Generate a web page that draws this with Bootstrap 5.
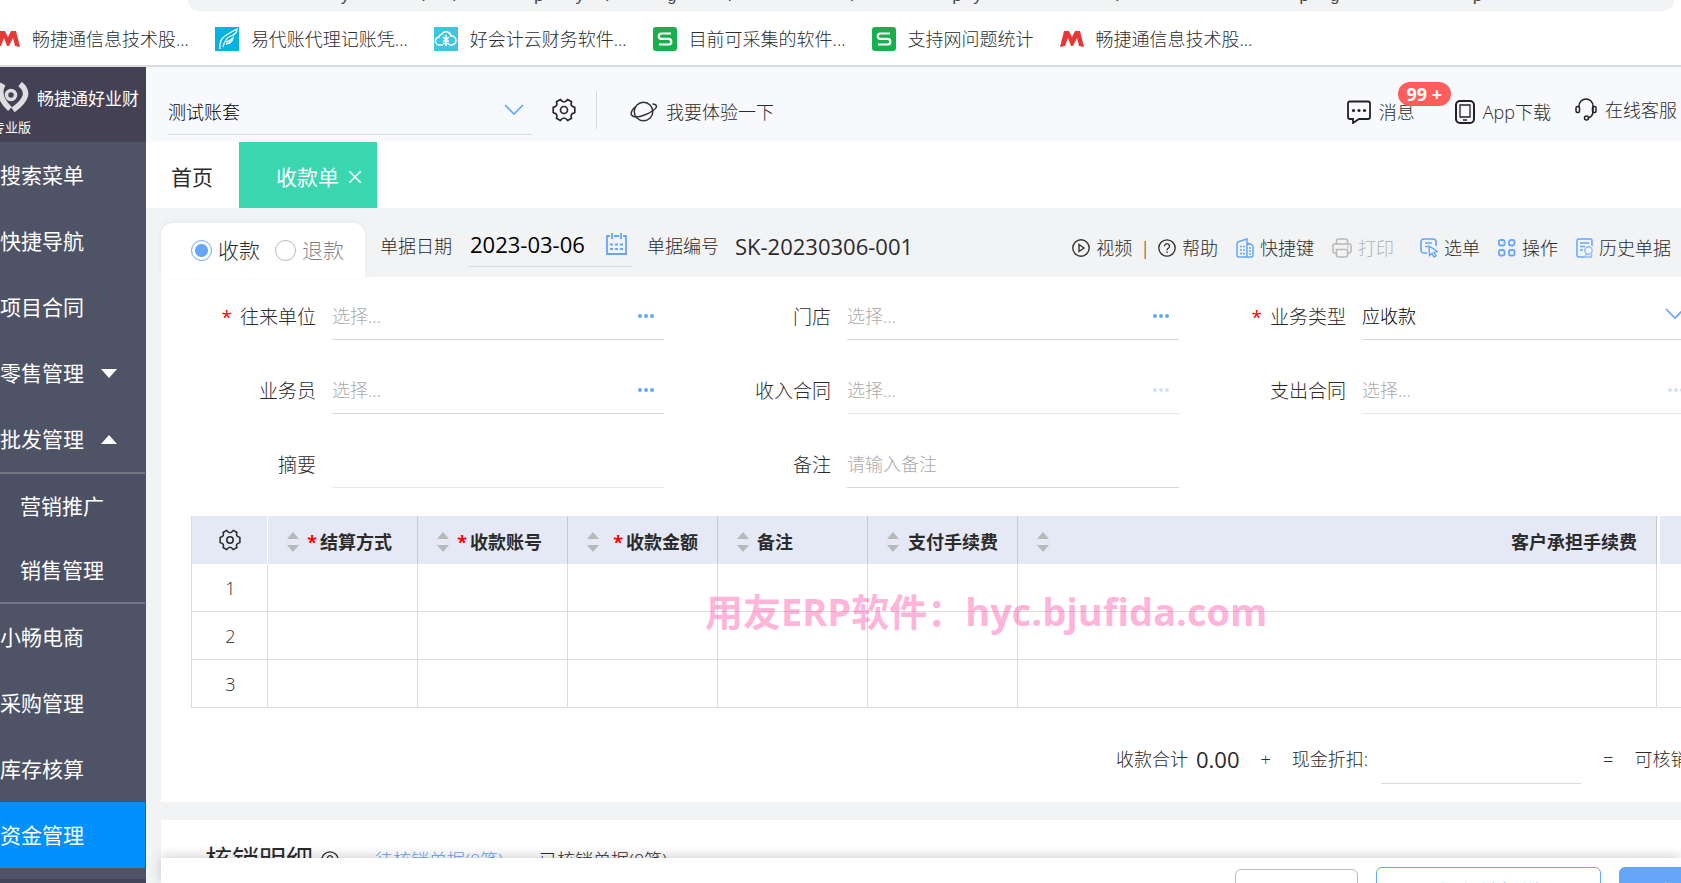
<!DOCTYPE html>
<html lang="zh-CN">
<head>
<meta charset="utf-8">
<meta name="viewport" content="width=device-width, initial-scale=1">
<title>收款单</title>
<link href="https://cdn.jsdelivr.net/npm/bootstrap@5.3.0/dist/css/bootstrap.min.css" rel="stylesheet">
<style>
:root{--blue:#66a6f8;--ink:#2b2b2b;--line:#dcdcdc;--page:#f2f3f5}
body{font-family:"Open Sans","Noto Sans CJK SC",sans-serif;font-size:18px;line-height:24px;color:var(--ink);font-weight:300;background:var(--page)}
a{color:inherit;text-decoration:none}
svg{flex:none;display:block}
.fs-menu{font-size:21px}
.shell{height:100vh;overflow:hidden}
.min-0{min-width:0;min-height:0}
/* browser strip */
.omni{height:11px;margin:0 7px 0 188px;background:#f1f3f4;border-radius:0 0 16px 16px;overflow:hidden;padding-left:152px;font:17px/16px "Liberation Mono",monospace;color:#444}
.omni span{display:block;margin-top:-11px;white-space:pre}
.bookmarks{height:56px;border-bottom:2px solid #dadce0;margin-left:-4px;gap:26px;color:#2b2e31;padding-top:2px}
.bookmarks a{gap:12px}
/* sidebar */
.side{width:146px;background:#4f5366;color:#fff;overflow:hidden;font-weight:400}
.brand-box{height:75px;background:#434153;padding-top:15px}
.brand-name{font-size:17px;padding-top:3px}
.edition{font-size:13px;line-height:16px;margin-left:-8px;margin-top:7px}
.side a{height:66px;gap:17px;margin-right:1px}
.side .submenu{border-top:2px solid #737685;border-bottom:2px solid #737685;background:#4c5064;margin-right:1px}
.submenu a{height:64px;padding-left:20px}
.side .active{background:#0091ff}
.side-foot{background:#42465a;margin-top:11px}
/* header */
.topbar{height:75px;background:#f8f9fd;padding:10px 4px 0 22px}
.account{width:364px;border-bottom:1px solid var(--line);height:45px;margin-top:5px}
.plain{border:0;background:none;padding:0;color:inherit;font-weight:inherit;line-height:24px}
select.plain{appearance:none;color:#000;width:100%;outline:0}
input.plain{width:100%;min-width:0;outline:0}
input.plain::placeholder{color:#aaa;opacity:1}
.vline{width:1px;height:38px;background:#d6d8dc;margin:0 25px 0 20px}
.count{left:51px;top:-14px;background:#ff5c5c;color:#fff;height:24px;width:53px;border-radius:12px;font-weight:700;white-space:nowrap}
.tabs{height:66px;background:#fff;font-weight:400}
.tab-home{padding:4px 26px 0 25px}
.tab-on{background:#3ad6b0;color:#fff;padding:3px 16px 0 37px;gap:10px}
/* document head */
.kind{height:54px;width:204px;background:#fff;border-radius:12px 12px 0 0;padding-left:30px;box-shadow:0 -1px 6px rgba(0,0,0,.05)}
.kind label{margin:0 15px 0 6px}
.kind input{appearance:none;width:21px;height:21px;border:1px solid #b4b4b4;border-radius:50%;margin:0;background:#fff}
.kind input:checked{border-color:var(--blue);background:radial-gradient(circle,var(--blue) 6px,#fff 7px)}
.dochead{padding:15px 0 0 15px}
.dochead > :not(.kind){margin-bottom:9px}
.dochead > .tools{margin-bottom:4px}
.date-box{width:164px;border-bottom:1px solid var(--line);height:43px;padding:0 5px 2px 2px}
.date-box,.doc-no{margin-left:16px}
.date-label,.no-label{margin-left:15px}
.fs-num{font-size:22px}
.num-strong{font-weight:400}
.tools{padding-right:10px}
.tools .plain{display:flex;align-items:center;white-space:nowrap;gap:6px;margin-right:18px}
.tools .plain.wide-gap{margin-right:26px}
.tools .plain.tight{margin-right:0}
.mute{color:#b4b4b4}
.panel{background:#fff;margin-left:15px}
/* form */
.fields{display:grid;grid-template-columns:repeat(3,332px);column-gap:183px;row-gap:26px;padding:15px 0 0 171px;overflow:hidden}
.field{height:48px;border-bottom:1px solid #d8d8d8;position:relative;padding:0 9px 0 0}
.field.off{border-color:#e8e8e8}
.field > label{position:absolute;right:100%;margin-right:16px;white-space:nowrap;font-size:19px;top:13px}
.req{color:red;margin-right:8px;font-weight:400}
.dots{color:var(--blue)}
.off .dots{color:#cfe3fd}
/* grid */
.grid-wrap{padding:28px 0 0 30px;overflow:hidden}
.bill{width:1660px;table-layout:fixed;border-collapse:separate;border-spacing:0;margin:0}
.bill th,.bill td{height:48px;padding:0 19px;border-right:1px solid var(--line)}
.bill th{background:#e5e9f5;border-color:#c8cad0;font-weight:700;padding-top:4px}
.bill td{border-bottom:1px solid var(--line);text-align:center}
.bill td:first-child{padding-left:21px}
.bill th:first-child{padding-top:0}
.bill tr > :first-child{border-left:1px solid var(--line)}
.bill th:first-child{border-right-color:#fff}
.bill .slit{border-left:3px solid #fff}
.bill .req{margin:0 3px 0 0;font-weight:700}
.bill .inset{padding-right:6px}
.mark-text{left:705px;top:588px;font-size:38px;line-height:46px;font-weight:700;color:rgba(255,84,172,.46);white-space:nowrap;pointer-events:none}
.totals{padding:25px 0 18px;margin-left:955px;white-space:nowrap;overflow:hidden}
.totals .part{margin-left:21px}
.discount{flex:none;width:200px!important;border-bottom:1px solid var(--line)!important;height:51px;margin:0 1px 0 13px}
.settle{margin-top:18px;padding:16px 0 0 44px;height:64px}
.settle h2{font-size:27px;line-height:36px;font-weight:400;margin:0}
.settle a{margin-left:36px}
.foot{height:25px;background:#fff;margin-left:15px;box-shadow:0 -2px 12px rgba(0,0,0,.18);position:relative;padding-left:1074px;gap:18px}
.foot button{height:50px;flex:none;border-radius:6px;border:1px solid var(--blue);background:#fff;color:var(--blue);margin-top:9px;font-size:21px;line-height:24px}
.foot .quiet{width:123px;border-color:#bbb;color:#555;margin-top:11px}
.foot .wide{width:225px}
.foot .fill{width:123px;background:var(--blue);color:#fff}
</style>
</head>
<body>
<svg width="0" height="0" class="position-absolute" aria-hidden="true">
  <defs>
    <symbol id="gear" viewBox="0 0 24 24"><g fill="none" stroke="currentColor" stroke-width="1.700" stroke-linejoin="round"><path d="M15.600 1.500L19.600 3.800Q17.500 8 22.800 9.300V14.700Q17.500 16 19.600 20.200L15.600 22.500Q12 17.500 8.400 22.500L4.400 20.200Q6.500 16 1.200 14.700V9.300Q6.500 8 4.400 3.800L8.400 1.500Q12 6.500 15.600 1.500z"/><circle cx="12" cy="12" r="3.500"/></g></symbol>
    <symbol id="sort" viewBox="0 0 12 20"><path d="M6 0l6 7H0zM6 20l6-7H0z" fill="#b8b8b8"/></symbol>
    <symbol id="dots3" viewBox="0 0 16 4"><g fill="currentColor"><circle cx="2" cy="2" r="2"/><circle cx="8" cy="2" r="2"/><circle cx="14" cy="2" r="2"/></g></symbol>
    <symbol id="chev" viewBox="0 0 20 12"><path d="M1 1l9 9 9-9" fill="none" stroke="#66a6f8" stroke-width="1.700"/></symbol>
    <symbol id="em" viewBox="0 0 24 18"><path d="M0 17L4 1h5l3 6 3-6h5l4 16-5-1-2-8-4 8h-2L8 8l-3 8z" fill="#e53935"/></symbol>
    <symbol id="ess" viewBox="0 0 24 24"><rect width="24" height="24" rx="3" fill="#18b04e"/><path d="M18 6.500H8.500a2.700 2.700 0 0 0 0 5.400h7a2.700 2.700 0 0 1 0 5.600H6" fill="none" stroke="#fff" stroke-width="2.200"/></symbol>
    <symbol id="help" viewBox="0 0 18 18"><g fill="none" stroke="currentColor" stroke-width="1.300"><circle cx="9" cy="9" r="8.200"/><path d="M6.500 7.200a2.500 2.500 0 1 1 3.800 2.100Q9 10 9 11.200M9 12.500v1.400"/></g></symbol>
  </defs>
</svg>
<div class="shell d-flex flex-column">
  <div class="bg-white">
    <div class="omni" aria-hidden="true"><span>y       /  /       p   y  /     g     /           /         p y             /                 p  g             p</span></div>
    <nav class="bookmarks d-flex align-items-center text-nowrap">
      <a href="#" class="d-flex align-items-center"><svg width="24" height="18"><use href="#em"/></svg>畅捷通信息技术股...</a>
      <a href="#" class="d-flex align-items-center"><svg width="24" height="24" viewBox="0 0 24 24"><path fill="#06b2e2" d="M0 0h24v24H0z"/><path d="M5 22Q4 13 10 9T22 2q0 5-6 7T8 20M11 15q4-1 7-4-1 5-7 6" fill="none" stroke="#fff" stroke-width="1.300"/></svg>易代账代理记账凭...</a>
      <a href="#" class="d-flex align-items-center"><svg width="24" height="24" viewBox="0 0 24 24"><path fill="#3ec6df" d="M0 0h24v24H0z"/><path d="M9 18H6a4 4 0 0 1-1-8 4 4 0 0 1 3-3 5 5 0 0 1 9 2 4.500 4.500 0 0 1 1 9h-3M12 8v11M9 10l3 3 3-3M9 14h6M9 16.500h6" fill="none" stroke="#fff" stroke-width="1.500"/></svg>好会计云财务软件...</a>
      <a href="#" class="d-flex align-items-center"><svg width="24" height="24"><use href="#ess"/></svg>目前可采集的软件...</a>
      <a href="#" class="d-flex align-items-center"><svg width="24" height="24"><use href="#ess"/></svg>支持网问题统计</a>
      <a href="#" class="d-flex align-items-center"><svg width="24" height="18"><use href="#em"/></svg>畅捷通信息技术股...</a>
    </nav>
  </div>
  <div class="d-flex flex-fill min-0">
    <aside class="side d-flex flex-column flex-shrink-0 fs-menu text-nowrap">
      <div class="brand-box flex-shrink-0">
        <div class="d-flex align-items-center">
          <svg width="29" height="30" viewBox="0 0 29 30"><g fill="none" stroke="#dedee2"><path d="M3 2Q-4 14 10 27M20 2Q34 13 13 28" stroke-width="5.500"/><circle cx="11" cy="13" r="4.500" stroke-width="3.500"/></g></svg>
          <span class="brand-name ms-2">畅捷通好业财</span>
        </div>
        <div class="edition">专业版</div>
      </div>
      <a href="#" class="d-flex align-items-center flex-shrink-0">搜索菜单</a>
      <a href="#" class="d-flex align-items-center flex-shrink-0">快捷导航</a>
      <a href="#" class="d-flex align-items-center flex-shrink-0">项目合同</a>
      <a href="#" class="d-flex align-items-center flex-shrink-0">零售管理<svg width="16" height="9"><path d="M0 0h16L8 9z" fill="#fff"/></svg></a>
      <a href="#" class="d-flex align-items-center flex-shrink-0">批发管理<svg width="16" height="9"><path d="M0 9h16L8 0z" fill="#fff"/></svg></a>
      <div class="submenu flex-shrink-0">
        <a href="#" class="d-flex align-items-center">营销推广</a>
        <a href="#" class="d-flex align-items-center">销售管理</a>
      </div>
      <a href="#" class="d-flex align-items-center flex-shrink-0">小畅电商</a>
      <a href="#" class="d-flex align-items-center flex-shrink-0">采购管理</a>
      <a href="#" class="d-flex align-items-center flex-shrink-0">库存核算</a>
      <a href="#" class="d-flex align-items-center flex-shrink-0 active">资金管理</a>
      <div class="side-foot flex-fill"></div>
    </aside>
    <div class="d-flex flex-column flex-fill min-0">
      <header class="topbar d-flex align-items-center flex-shrink-0 text-nowrap">
        <div class="account d-flex align-items-center pe-2">
          <select class="plain" aria-label="账套"><option>测试账套</option></select>
          <svg width="20" height="12" class="mb-1"><use href="#chev"/></svg>
        </div>
        <button class="plain ms-3 ps-1" aria-label="设置"><svg width="24" height="24"><use href="#gear"/></svg></button>
        <span class="vline"></span>
        <a href="#" class="d-flex align-items-center gap-2 ms-2 pt-1"><svg width="28" height="22" viewBox="0 0 28 22"><g fill="none" stroke="#333" stroke-width="1.500"><circle cx="13.500" cy="10.500" r="9.300"/><path d="M5 6Q0 11 1.500 14q3 4 13 0t12-8q0-3-4-3"/></g></svg>我要体验一下</a>
        <div class="d-flex align-items-center ms-auto">
          <a href="#" class="d-flex align-items-center gap-2 position-relative pt-1 me-4"><svg width="24" height="24" viewBox="0 0 24 24"><path d="M3 1.500h18q2 0 2 2V17q0 2-2 2h-9l-6 4v-4H3q-2 0-2-2V3.500q0-2 2-2z" fill="none" stroke="#222" stroke-width="1.800"/><g fill="#222"><circle cx="6.500" cy="10.500" r="1.600"/><circle cx="12" cy="10.500" r="1.600"/><circle cx="17.500" cy="10.500" r="1.600"/></g></svg>消息<span class="count position-absolute text-center">99 +</span></a>
          <a href="#" class="d-flex align-items-center gap-2 pt-1 ms-3 me-4"><svg width="20" height="24" viewBox="0 0 20 24"><g fill="none" stroke="#222"><rect x="1" y="1" width="18" height="22" rx="4" stroke-width="2"/><path d="M5 5h10v12H5z" stroke-width="1.300"/><path d="M8 20h4" stroke-width="1.500"/></g></svg>App下载</a>
          <a href="#" class="d-flex align-items-center gap-2"><svg width="22" height="24" viewBox="0 0 22 24"><g fill="none" stroke="#222" stroke-width="1.500"><path d="M4 9V8a7 7 0 0 1 14 0v5q0 6-5 7"/><rect x="1" y="8.500" width="3.500" height="6" rx="1.500"/><rect x="17.500" y="8.500" width="3.500" height="6" rx="1.500"/><circle cx="11.500" cy="20" r="2"/></g></svg>在线客服</a>
        </div>
      </header>
      <nav class="tabs d-flex flex-shrink-0 fs-menu">
        <a href="#" class="tab-home d-flex align-items-center">首页</a>
        <a href="#" class="tab-on d-flex align-items-center">收款单<svg width="12" height="12"><path d="M0 0l12 12M12 0L0 12" stroke="#fff" stroke-width="1.500"/></svg></a>
      </nav>
      <main class="flex-fill overflow-hidden min-0">
        <div class="dochead d-flex align-items-center text-nowrap">
          <div class="kind d-flex align-items-center fs-menu flex-shrink-0">
            <input type="radio" name="kind" id="k1" checked><label for="k1">收款</label>
            <input type="radio" name="kind" id="k2"><label for="k2" class="text-black-50">退款</label>
          </div>
          <label for="date" class="date-label">单据日期</label>
          <div class="date-box d-flex align-items-center">
            <input id="date" class="plain fs-num num-strong text-black" value="2023-03-06">
            <svg width="21" height="22" viewBox="0 0 21 22"><g fill="none" stroke="#66a6f8" stroke-width="1.800"><path d="M4 3H1v18h19V3h-3M8 3h5M6 0v6M15 0v6"/><path d="M4 11.500h13M4 16h13" stroke-dasharray="3 2"/></g></svg>
          </div>
          <span class="no-label">单据编号</span><span class="doc-no fs-num num-strong">SK-20230306-001</span>
          <div class="tools d-flex align-items-center ms-auto">
            <button class="plain tight"><svg width="18" height="18" viewBox="0 0 18 18"><g fill="none" stroke="#333" stroke-width="1.400"><circle cx="9" cy="9" r="8.200"/><path d="M7 5.500v7l5-3.500z"/></g></svg>视频</button>
            <span class="mx-2">|</span>
            <button class="plain"><svg width="18" height="18"><use href="#help"/></svg>帮助</button>
            <button class="plain"><svg width="18" height="20" viewBox="0 0 18 20"><g fill="none" stroke="#66a6f8" stroke-width="1.500"><path d="M1 17.500V5.500Q1 4 3 3.500L11 1v18H2.500Q1 19 1 17.500zM11 5l4.500 1.500Q17 7 17 9v8q0 2-2 2h-4"/><path d="M4 8.500h5M4 12h5M4 15.500h5" stroke-dasharray="2 1"/><path d="M13 10h2M13 13h2M13 16h2"/></g></svg>快捷键</button>
            <button class="plain mute wide-gap" disabled><svg width="20" height="20" viewBox="0 0 20 20"><path d="M4.500 6V3q0-2 2-2h7q2 0 2 2v3M4 15H2.500Q1 15 1 13V8q0-2 2-2h14q2 0 2 2v5q0 2-1.500 2H16M4.500 11.500h11V17q0 2-2 2h-7q-2 0-2-2zM15 8.700h1.500" fill="none" stroke="#b8b8b8" stroke-width="1.600"/></svg>打印</button>
            <button class="plain"><svg width="18" height="20" viewBox="0 0 18 20"><path d="M7 15H4q-3 0-3-3V4q0-3 3-3h9q3 0 3 3v4M5 5h7M5 8.500h3" fill="none" stroke="#66a6f8" stroke-width="1.700"/><path d="M9 8l8.500 5.500-3.500.8 2 3.700-2 1-2-3.700-2.500 2.200z" fill="none" stroke="#66a6f8" stroke-width="1.400"/></svg>选单</button>
            <button class="plain"><svg width="18" height="18" viewBox="0 0 18 18"><g fill="none" stroke="#66a6f8" stroke-width="1.800"><rect x="1" y="1" width="5.500" height="5.500" rx="1.500"/><rect x="11" y="1" width="5.500" height="5.500" rx="2"/><rect x="1" y="11" width="5.500" height="5.500" rx="1.500"/><rect x="11" y="11" width="5.500" height="5.500" rx="1.500"/></g></svg>操作</button>
            <button class="plain tight"><svg width="17" height="20" viewBox="0 0 17 20"><path d="M16 8V2.500Q16 1 14.500 1h-12Q1 1 1 2.500v15Q1 19 2.500 19H9M4 5h9M4 8.500h5M4 12h3" fill="none" stroke="#66a6f8" stroke-width="1.500"/><path d="M10 16v3h5.500v-3" fill="none" stroke="#8cbcfa" stroke-width="1.400"/><circle cx="12.500" cy="12.500" r="3.700" fill="none" stroke="#8cbcfa" stroke-width="1.400"/></svg>历史单据</button>
          </div>
        </div>
        <section class="panel">
          <form class="fields">
            <div class="field d-flex align-items-center"><label for="f1"><span class="req">*</span>往来单位</label><input id="f1" class="plain" placeholder="选择..."><svg class="dots" width="18" height="4"><use href="#dots3"/></svg></div>
            <div class="field d-flex align-items-center"><label for="f2">门店</label><input id="f2" class="plain" placeholder="选择..."><svg class="dots" width="18" height="4"><use href="#dots3"/></svg></div>
            <div class="field d-flex align-items-center"><label for="f3"><span class="req">*</span>业务类型</label><select id="f3" class="plain"><option>应收款</option></select><svg width="20" height="12" class="mb-1"><use href="#chev"/></svg></div>
            <div class="field d-flex align-items-center"><label for="f4">业务员</label><input id="f4" class="plain" placeholder="选择..."><svg class="dots" width="18" height="4"><use href="#dots3"/></svg></div>
            <div class="field off d-flex align-items-center"><label for="f5">收入合同</label><input id="f5" class="plain" placeholder="选择..."><svg class="dots" width="18" height="4"><use href="#dots3"/></svg></div>
            <div class="field off d-flex align-items-center"><label for="f6">支出合同</label><input id="f6" class="plain" placeholder="选择..."><svg class="dots" width="18" height="4"><use href="#dots3"/></svg></div>
            <div class="field off d-flex align-items-center"><label for="f7">摘要</label><input id="f7" class="plain"></div>
            <div class="field d-flex align-items-center"><label for="f8">备注</label><input id="f8" class="plain" placeholder="请输入备注"></div>
          </form>
          <div class="grid-wrap">
            <table class="bill">
              <colgroup><col style="width:77px"><col style="width:150px"><col style="width:150px"><col style="width:150px"><col style="width:150px"><col style="width:150px"><col style="width:639px"><col></colgroup>
              <thead><tr>
                <th><svg class="mx-auto" width="22" height="22"><use href="#gear"/></svg></th>
                <th><div class="inset d-flex align-items-center"><svg width="12" height="20"><use href="#sort"/></svg><span class="req ms-auto">*</span>结算方式</div></th>
                <th><div class="inset d-flex align-items-center"><svg width="12" height="20"><use href="#sort"/></svg><span class="req ms-auto">*</span>收款账号</div></th>
                <th><div class="d-flex align-items-center"><svg width="12" height="20"><use href="#sort"/></svg><span class="req ms-auto">*</span>收款金额</div></th>
                <th><div class="d-flex align-items-center"><svg width="12" height="20" class="me-2"><use href="#sort"/></svg>备注</div></th>
                <th><div class="d-flex align-items-center justify-content-between"><svg width="12" height="20"><use href="#sort"/></svg>支付手续费</div></th>
                <th><div class="d-flex align-items-center justify-content-between"><svg width="12" height="20"><use href="#sort"/></svg>客户承担手续费</div></th>
                <th class="slit"></th>
              </tr></thead>
              <tbody>
                <tr><td>1</td><td></td><td></td><td></td><td></td><td></td><td></td><td class="slit"></td></tr>
                <tr><td>2</td><td></td><td></td><td></td><td></td><td></td><td></td><td class="slit"></td></tr>
                <tr><td>3</td><td></td><td></td><td></td><td></td><td></td><td></td><td class="slit"></td></tr>
              </tbody>
            </table>
          </div>
          <div class="totals d-flex align-items-center">
            <span>收款合计</span><span class="fs-num num-strong ms-2">0.00</span><span class="part">+</span>
            <label for="disc" class="part">现金折扣:</label><input id="disc" class="plain discount">
            <span class="part">=</span><span class="part">可核销金额</span>
          </div>
        </section>
        <section class="panel settle d-flex align-items-center text-nowrap">
          <h2>核销明细</h2><svg width="18" height="18" class="ms-2"><use href="#help"/></svg>
          <a href="#" class="dots">待核销单据(0笔)</a><a href="#">已核销单据(0笔)</a>
        </section>
      </main>
      <footer class="foot d-flex flex-shrink-0 align-items-start">
        <button class="quiet">取消</button><button class="wide">保存并新增</button><button class="fill">保存</button>
      </footer>
    </div>
  </div>
</div>
<div class="mark-text position-absolute" aria-hidden="true">用友ERP软件：hyc.bjufida.com</div>
<script src="https://cdn.jsdelivr.net/npm/bootstrap@5.3.0/dist/js/bootstrap.bundle.min.js"></script>
</body>
</html>
